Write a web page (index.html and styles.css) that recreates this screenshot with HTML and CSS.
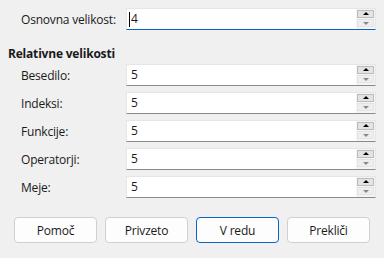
FILE: index.html
```html
<!DOCTYPE html>
<html lang="sl">
<head>
<meta charset="utf-8">
<link rel="stylesheet" href="styles.css">
</head>
<body>
<div class="dlg">
  <div class="row first">
    <span class="lbl">Osnovna velikost:</span>
    <div class="spin focus">
      <div class="val"><span class="caret"></span>4</div>
      <div class="btns"><span class="up"></span><span class="down"></span></div>
    </div>
  </div>
  <div class="hdr">Relativne velikosti</div>
  <div class="rows">
    <div class="row">
      <span class="lbl">Besedilo:</span>
      <div class="spin"><div class="val">5</div><div class="btns"><span class="up"></span><span class="down"></span></div></div>
    </div>
    <div class="row">
      <span class="lbl">Indeksi:</span>
      <div class="spin"><div class="val">5</div><div class="btns"><span class="up"></span><span class="down"></span></div></div>
    </div>
    <div class="row">
      <span class="lbl">Funkcije:</span>
      <div class="spin"><div class="val">5</div><div class="btns"><span class="up"></span><span class="down"></span></div></div>
    </div>
    <div class="row">
      <span class="lbl">Operatorji:</span>
      <div class="spin"><div class="val">5</div><div class="btns"><span class="up"></span><span class="down"></span></div></div>
    </div>
    <div class="row">
      <span class="lbl">Meje:</span>
      <div class="spin"><div class="val">5</div><div class="btns"><span class="up"></span><span class="down"></span></div></div>
    </div>
  </div>
  <div class="actions">
    <button class="btn">Pomoč</button>
    <button class="btn">Privzeto</button>
    <button class="btn default">V redu</button>
    <button class="btn">Prekliči</button>
  </div>
</div>
</body>
</html>
```

FILE: styles.css
```css
html, body {
  margin: 0;
  padding: 0;
  background: #f0f0f0;
}
body {
  width: 384px;
  height: 258px;
  font-family: "Open Sans", "Noto Sans", "Liberation Sans", sans-serif;
  font-size: 12px;
  color: #1a1a1a;
}
.dlg {
  padding-top: 8px;
}
.row {
  display: flex;
  align-items: center;
  height: 22px;
  padding-left: 21px;
}
.lbl {
  width: 105px;
  letter-spacing: -0.2px;
}
.hdr {
  margin-top: 15px;
  padding-left: 8px;
  font-weight: bold;
  height: 17px;
  line-height: 17px;
  letter-spacing: -0.2px;
}
.rows {
  margin-top: 2px;
  display: flex;
  flex-direction: column;
  gap: 6px;
}
.spin {
  width: 250px;
  height: 22px;
  box-sizing: border-box;
  display: flex;
  background: #f4f4f4;
  border: 1px solid #e6e6e6;
  border-bottom: 1px solid #8a8a8a;
}
.spin.focus {
  border-bottom: 1px solid #0a64c2;
}
.val {
  flex: 1;
  background: #fff;
  padding-left: 4px;
  line-height: 20px;
  position: relative;
}
.caret {
  position: absolute;
  left: 2px;
  top: 3px;
  width: 1px;
  height: 15px;
  background: #000;
}
.btns {
  width: 17px;
  display: flex;
  flex-direction: column;
  padding: 1px 1px 0 1px;
  gap: 1px;
}
.btns span {
  position: relative;
  height: 8px;
  box-sizing: border-box;
}
.btns .up {
  background: #e3e3e3;
  border: 1px solid #bcbcbc;
}
.btns .down {
  background: #eeeeee;
  border: 1px solid #e4e4e4;
}
.btns .up::after, .btns .down::after {
  content: "";
  position: absolute;
  left: 50%;
  top: 50%;
  margin-left: -3px;
  width: 0;
  height: 0;
  border-left: 3px solid transparent;
  border-right: 3px solid transparent;
}
.btns .up::after {
  margin-top: -2px;
  border-bottom: 3px solid #000;
}
.btns .down::after {
  margin-top: -1px;
  border-top: 3px solid #8a8a8a;
}
.actions {
  margin-top: 19px;
  padding-left: 14px;
  display: flex;
  gap: 8px;
}
.btn {
  width: 83px;
  height: 26px;
  box-sizing: border-box;
  background: #fdfdfd;
  border: 1px solid #d0d0d0;
  border-radius: 4px;
  font-family: inherit;
  font-size: 12px;
  color: #1a1a1a;
  padding: 0;
  letter-spacing: -0.2px;
}
.btn.default {
  border: 1px solid #0a64c2;
}
```
